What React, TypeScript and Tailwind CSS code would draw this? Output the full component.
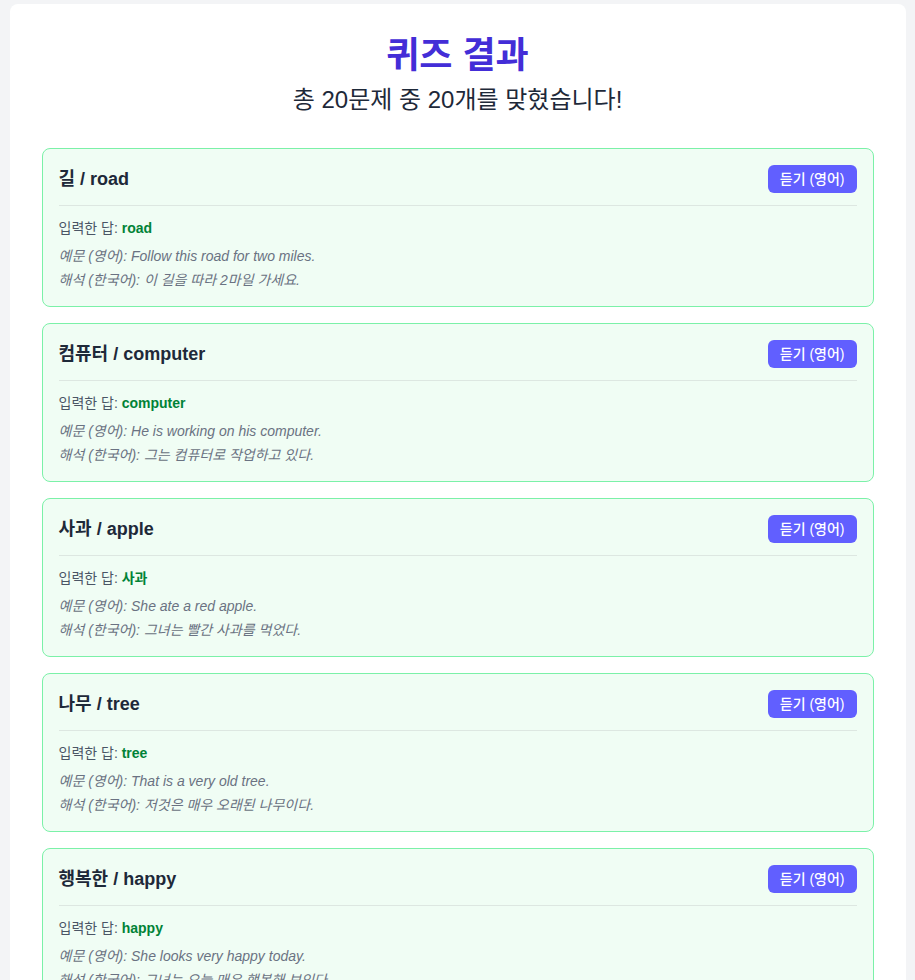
import React from "react";

const items = [
  { ko: "길", en: "road", answer: "road", ex: "Follow this road for two miles.", tr: "이 길을 따라 2마일 가세요." },
  { ko: "컴퓨터", en: "computer", answer: "computer", ex: "He is working on his computer.", tr: "그는 컴퓨터로 작업하고 있다." },
  { ko: "사과", en: "apple", answer: "사과", ex: "She ate a red apple.", tr: "그녀는 빨간 사과를 먹었다." },
  { ko: "나무", en: "tree", answer: "tree", ex: "That is a very old tree.", tr: "저것은 매우 오래된 나무이다." },
  { ko: "행복한", en: "happy", answer: "happy", ex: "She looks very happy today.", tr: "그녀는 오늘 매우 행복해 보인다." },
];

export default function App() {
  return (
    <div
      className="min-h-screen bg-gray-100 pt-1"
      style={{ fontFamily: '"Liberation Sans", "Noto Sans CJK KR", sans-serif' }}
    >
      <div className="max-w-4xl mx-auto bg-white rounded-lg p-8">
        <h1 className="text-4xl font-bold text-center text-indigo-700">퀴즈 결과</h1>
        <p className="text-2xl text-center text-gray-800 mt-2 mb-8">총 20문제 중 20개를 맞혔습니다!</p>
        <div className="flex flex-col gap-4">
          {items.map((it) => (
            <div key={it.en} className="bg-green-50 border border-green-300 rounded-lg p-4">
              <div className="flex items-center justify-between pb-3 border-b border-[#dde7e1]">
                <h2 className="text-lg font-semibold text-gray-800">
                  {it.ko} / {it.en}
                </h2>
                <button className="bg-indigo-500 text-white text-sm font-medium rounded-md px-3 h-7">듣기 (영어)</button>
              </div>
              <div className="mt-3 text-sm">
                <p className="text-gray-600">
                  입력한 답: <span className="font-bold text-green-700">{it.answer}</span>
                </p>
                <p className="italic text-gray-500 mt-2">예문 (영어): {it.ex}</p>
                <p className="italic text-gray-500 mt-1">해석 (한국어): {it.tr}</p>
              </div>
            </div>
          ))}
        </div>
      </div>
    </div>
  );
}
